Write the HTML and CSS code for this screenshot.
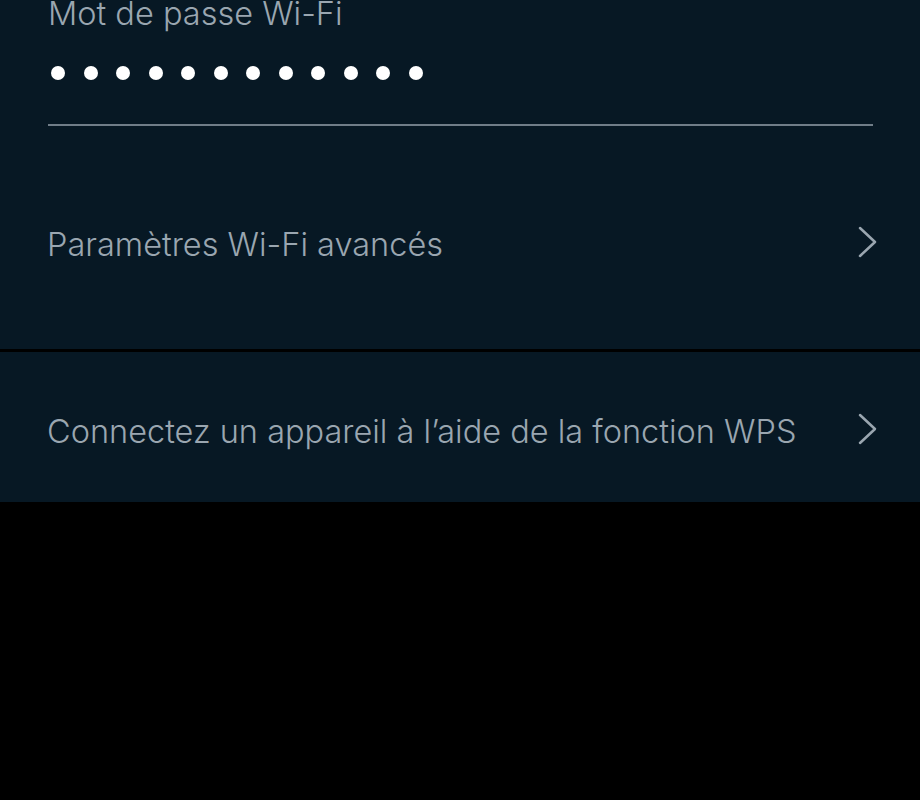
FILE: index.html
```html
<!DOCTYPE html>
<html lang="fr">
<head>
    <meta charset="UTF-8">
    <meta name="viewport" content="width=device-width, initial-scale=1.0">
    <title>Wi-Fi</title>
    <link rel="stylesheet" href="styles.css">
</head>
<body>
    <section class="panel">
        <div class="field">
            <div class="field-label">Mot de passe Wi-Fi</div>
            <div class="dots">
                <span></span><span></span><span></span><span></span>
                <span></span><span></span><span></span><span></span>
                <span></span><span></span><span></span><span></span>
            </div>
        </div>
        <a class="row row-first" href="#">
            <span class="row-text">Paramètres Wi-Fi avancés</span>
            <svg class="chevron" width="20" height="32" viewBox="0 0 20 32"><path d="M2 2 L17 16 L2 30" fill="none" stroke="#9aa6b0" stroke-width="2.5" stroke-linecap="round" stroke-linejoin="round"/></svg>
        </a>
    </section>

    <section class="panel">
        <a class="row row-second" href="#">
            <span class="row-text">Connectez un appareil à l’aide de la fonction WPS</span>
            <svg class="chevron" width="20" height="32" viewBox="0 0 20 32"><path d="M2 2 L17 16 L2 30" fill="none" stroke="#9aa6b0" stroke-width="2.5" stroke-linecap="round" stroke-linejoin="round"/></svg>
        </a>
    </section>
</body>
</html>
```

FILE: styles.css
```css
body {
    margin: 0;
    background: #000;
    font-family: Inter, "Liberation Sans", sans-serif;
    color: #9aa6b0;
}

.panel {
    background: #071824;
    margin-bottom: 3px;
}

.field {
    padding: 0 47px 0 48px;
}

.field-label {
    font-size: 32.5px;
    font-weight: 300;
    line-height: 40px;
    margin-top: -6px;
}

.dots {
    display: flex;
    gap: 18.5px;
    height: 14px;
    margin-top: 32px;
    padding: 0 0 44px 3px;
    border-bottom: 2px solid #707d88;
}

.dots span {
    width: 14px;
    height: 14px;
    border-radius: 50%;
    background: #fff;
}

.row {
    display: flex;
    align-items: center;
    justify-content: space-between;
    box-sizing: border-box;
    height: 150px;
    padding: 9px 42px 0 47px;
    color: inherit;
    text-decoration: none;
}

.row-first {
    height: 223px;
    padding-top: 14px;
}

.row-text {
    font-size: 32.5px;
    font-weight: 300;
}

.chevron {
    display: block;
    margin-bottom: 6px;
}
```
